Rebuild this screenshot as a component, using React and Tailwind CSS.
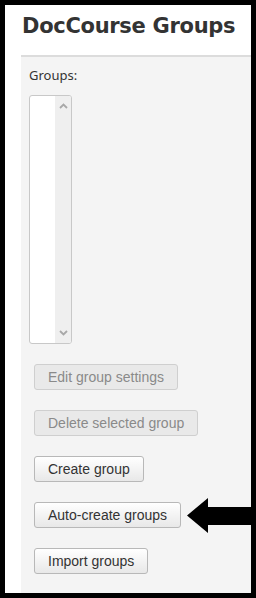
import React from "react";

const btnBase =
  "h-[26px] px-[13px] rounded-[3px] border text-[14px] leading-none whitespace-nowrap";
const btnOn = btnBase + " border-[#b8b8b8] bg-gradient-to-b from-white to-[#e8e8e8] text-[#333]";
const btnOff = btnBase + " border-[#cfcfcf] bg-[#e9e9e9] text-[#8a8a8a]";

function Chevron({ up }) {
  return (
    <svg width="9" height="6" viewBox="0 0 9 6">
      <path
        d={up ? "M1 5 L4.5 1.5 L8 5" : "M1 1 L4.5 4.5 L8 1"}
        fill="none"
        stroke="#a8a8a8"
        strokeWidth="1.8"
      />
    </svg>
  );
}

export default function App() {
  const buttons = [
    { label: "Edit group settings", disabled: true },
    { label: "Delete selected group", disabled: true },
    { label: "Create group" },
    { label: "Auto-create groups" },
    { label: "Import groups" },
  ];

  return (
    <div className="relative w-[256px] h-[598px] bg-black p-[5px]">
      <div className="w-full h-full bg-white flex flex-col">
        {/* Title */}
        <h1
          className="h-[50px] pl-[17px] pt-[8px] text-[21px] font-bold tracking-[-0.3px] text-[#333] leading-[26px]"
          style={{ fontFamily: '"DejaVu Sans", sans-serif' }}
        >
          DocCourse Groups
        </h1>

        {/* Panel */}
        <div
          className="flex-1 ml-[16px] border-t-2 border-[#dcdcdc] bg-[#f4f4f4] pt-[9px]"
          style={{ fontFamily: '"Liberation Sans", Arial, sans-serif' }}
        >
          <div
            className="pl-[8px] text-[13px] leading-[18px] text-[#333]"
            style={{ fontFamily: '"Noto Sans", sans-serif' }}
          >
            Groups:
          </div>

          <div className="ml-[8px] mt-[11px] w-[43px] h-[249px] border border-[#c8c8c8] rounded-[3px] bg-white flex overflow-hidden">
            <div className="flex-1" />
            <div className="w-[16px] bg-[#efefef] flex flex-col items-center justify-between py-[7px]">
              <Chevron up />
              <Chevron />
            </div>
          </div>

          <div className="pl-[13px] pt-[20px] flex flex-col items-start gap-[20px]">
            {buttons.map((b) => (
              <button
                key={b.label}
                disabled={b.disabled}
                className={b.disabled ? btnOff : btnOn}
              >
                {b.label}
              </button>
            ))}
          </div>
        </div>
      </div>

      {/* Pointer arrow */}
      <svg
        className="absolute left-[187px] top-[498px]"
        width="69"
        height="35"
        viewBox="0 0 69 35"
      >
        <polygon points="0,17.5 21,0 21,9 69,9 69,27 21,27 21,35" fill="#000" />
      </svg>
    </div>
  );
}
